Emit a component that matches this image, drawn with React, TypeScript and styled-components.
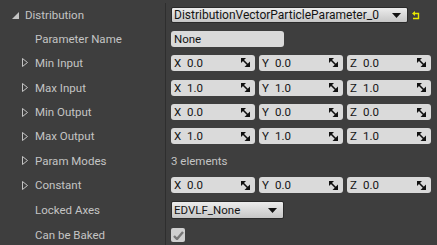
import React from "react";
import styled, { createGlobalStyle } from "styled-components";

const GlobalStyle = createGlobalStyle`
  html, body {
    margin: 0;
    padding: 0;
    background: #3e3e3e;
  }
`;

const Panel = styled.div`
  width: 437px;
  height: 245px;
  overflow: hidden;
  background: #3e3e3e;
  padding-top: 3px;
  box-sizing: border-box;
  display: flex;
  flex-direction: column;
  font-family: Roboto, "Liberation Sans", sans-serif;
`;

const Row = styled.div<{ $h: number }>`
  display: flex;
  height: ${(p) => p.$h}px;
  flex-shrink: 0;
`;

const NameCell = styled.div<{ $indent: number }>`
  width: 166px;
  flex-shrink: 0;
  display: flex;
  align-items: center;
  padding-left: ${(p) => p.$indent}px;
  box-sizing: border-box;
  border-right: 1px solid #2e2e2e;
  color: #c4c4c4;
  font-size: 11.5px;
  white-space: nowrap;
`;

const Toggle = styled.span`
  width: 13px;
  height: 10px;
  display: flex;
  align-items: center;
  flex-shrink: 0;
`;

const ValueCell = styled.div`
  flex: 1;
  display: flex;
  align-items: center;
  gap: 4px;
  padding-left: 5px;
`;

const Combo = styled.div<{ $w: number; $h: number; $fs: number }>`
  width: ${(p) => p.$w}px;
  height: ${(p) => p.$h}px;
  box-sizing: border-box;
  border-radius: 2px;
  background: linear-gradient(#ececec, #c6c6c6);
  border: 1px solid #2a2a2a;
  display: flex;
  align-items: center;
  justify-content: space-between;
  padding: 0 6px 0 2px;
  color: #141414;
  font-size: ${(p) => p.$fs}px;
  white-space: nowrap;
`;

const TextBox = styled.div`
  width: 113px;
  height: 16px;
  border-radius: 3px;
  background: #dadada;
  display: flex;
  align-items: center;
  padding-left: 3px;
  box-sizing: border-box;
  color: #141414;
  font-size: 11.5px;
`;

const NumField = styled.div`
  width: 84px;
  height: 16px;
  border-radius: 3px;
  background: #dadada;
  display: flex;
  align-items: center;
  box-sizing: border-box;
  padding: 0 5px 0 3px;
  color: #141414;
  font-size: 11.5px;
`;

const Axis = styled.span`
  width: 13px;
`;

const Num = styled.span`
  flex: 1;
`;

const Plain = styled.span`
  color: #c4c4c4;
  font-size: 11.5px;
`;

const Check = styled.div`
  width: 14px;
  height: 14px;
  border-radius: 2px;
  background: #cfcfcf;
  display: flex;
  align-items: center;
  justify-content: center;
`;

const Expanded = () => (
  <svg width="7" height="7" viewBox="0 0 7 7">
    <polygon points="7,0 7,7 0,7" fill="#c4c4c4" />
  </svg>
);

const Collapsed = () => (
  <svg width="6" height="9" viewBox="0 0 6 9">
    <polygon points="0.5,0.5 5.5,4.5 0.5,8.5" fill="none" stroke="#c4c4c4" strokeWidth="1" />
  </svg>
);

const Arrow = () => (
  <svg width="9" height="5" viewBox="0 0 9 5">
    <polygon points="0,0 9,0 4.5,5" fill="#111" />
  </svg>
);

const Spin = () => (
  <svg width="9" height="9" viewBox="0 0 9 9">
    <polygon points="0,0 5,0 0,5" fill="#111" />
    <polygon points="9,9 3.5,9 9,3.5" fill="#111" />
    <line x1="1.5" y1="1.5" x2="7" y2="7" stroke="#111" strokeWidth="1.6" />
  </svg>
);

const Reset = () => (
  <svg width="8" height="9" viewBox="0 0 8 9">
    <polygon points="0,2.5 3,0 3,5" fill="#e8e800" />
    <path d="M2.5 2.5 H6.5 V7.5 H1" fill="none" stroke="#e8e800" strokeWidth="1.4" />
  </svg>
);

const Tick = () => (
  <svg width="11" height="9" viewBox="0 0 11 9">
    <path d="M1 5 L4 8 L10 1" fill="none" stroke="#777" strokeWidth="2.4" />
  </svg>
);

type Kind = "expanded" | "collapsed" | "none";

function Name({ label, indent, kind }: { label: string; indent: number; kind: Kind }) {
  return (
    <NameCell $indent={indent}>
      <Toggle>
        {kind === "expanded" && <Expanded />}
        {kind === "collapsed" && <Collapsed />}
      </Toggle>
      {label}
    </NameCell>
  );
}

function Vector({ values }: { values: string[] }) {
  return (
    <>
      {["X", "Y", "Z"].map((a, i) => (
        <NumField key={a}>
          <Axis>{a}</Axis>
          <Num>{values[i]}</Num>
          <Spin />
        </NumField>
      ))}
    </>
  );
}

const zero = ["0.0", "0.0", "0.0"];
const one = ["1.0", "1.0", "1.0"];

export default function App() {
  return (
    <>
      <GlobalStyle />
      <Panel>
        <Row $h={24}>
          <Name label="Distribution" indent={12} kind="expanded" />
          <ValueCell>
            <Combo $w={237} $h={16} $fs={12}>
              DistributionVectorParticleParameter_0
              <Arrow />
            </Combo>
            <Reset />
          </ValueCell>
        </Row>
        <Row $h={23}>
          <Name label="Parameter Name" indent={22} kind="none" />
          <ValueCell>
            <TextBox>None</TextBox>
          </ValueCell>
        </Row>
        <Row $h={25}>
          <Name label="Min Input" indent={22} kind="collapsed" />
          <ValueCell>
            <Vector values={zero} />
          </ValueCell>
        </Row>
        <Row $h={25}>
          <Name label="Max Input" indent={22} kind="collapsed" />
          <ValueCell>
            <Vector values={one} />
          </ValueCell>
        </Row>
        <Row $h={24}>
          <Name label="Min Output" indent={22} kind="collapsed" />
          <ValueCell>
            <Vector values={zero} />
          </ValueCell>
        </Row>
        <Row $h={24}>
          <Name label="Max Output" indent={22} kind="collapsed" />
          <ValueCell>
            <Vector values={one} />
          </ValueCell>
        </Row>
        <Row $h={25}>
          <Name label="Param Modes" indent={22} kind="collapsed" />
          <ValueCell>
            <Plain>3 elements</Plain>
          </ValueCell>
        </Row>
        <Row $h={24}>
          <Name label="Constant" indent={22} kind="collapsed" />
          <ValueCell>
            <Vector values={zero} />
          </ValueCell>
        </Row>
        <Row $h={26}>
          <Name label="Locked Axes" indent={22} kind="none" />
          <ValueCell>
            <Combo $w={113} $h={18} $fs={11.5}>
              EDVLF_None
              <Arrow />
            </Combo>
          </ValueCell>
        </Row>
        <Row $h={24}>
          <Name label="Can be Baked" indent={22} kind="none" />
          <ValueCell>
            <Check>
              <Tick />
            </Check>
          </ValueCell>
        </Row>
      </Panel>
    </>
  );
}
